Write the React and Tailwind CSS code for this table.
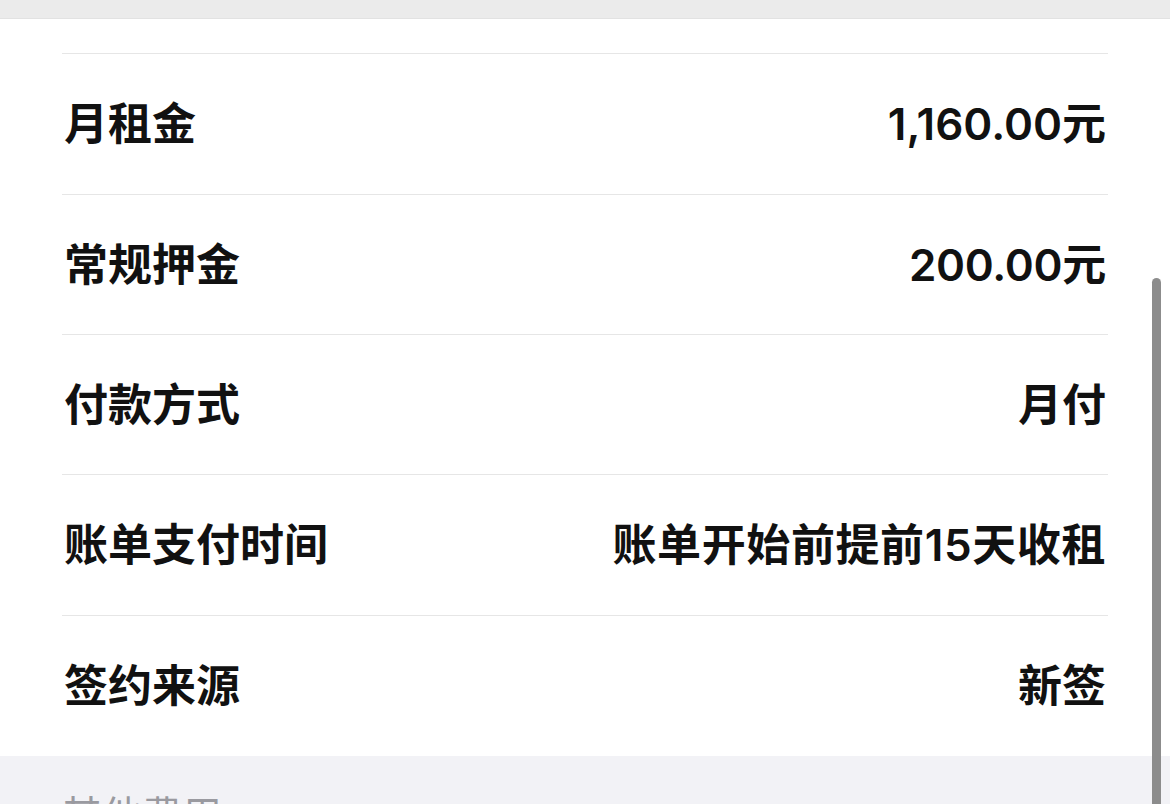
import React from "react";

const rows = [
  { label: "月租金", value: "1,160.00元", h: "h-[141px]", t: "tracking-[0px]" },
  { label: "常规押金", value: "200.00元", h: "h-[140px]", t: "tracking-[-0.3px]" },
  { label: "付款方式", value: "月付", h: "h-[140px]", t: "tracking-[0px]" },
  { label: "账单支付时间", value: "账单开始前提前15天收租", h: "h-[141px]", t: "tracking-[0.6px]" },
  { label: "签约来源", value: "新签", h: "h-[141px]", t: "tracking-[0px]" },
];

export default function App() {
  return (
    <div
      className="relative w-[1170px] h-[804px] overflow-hidden bg-white text-[#111]"
      style={{ fontFamily: 'Inter, "Noto Sans CJK SC", sans-serif' }}
    >
      <div className="h-[19px] bg-[#ebebeb] border-b border-[#e2e2e2]" />
      <div className="px-[62px]">
        <div className="h-[34px]" />
        {rows.map((r) => (
          <div
            key={r.label}
            className={`flex items-center justify-between border-t border-[#e6e6e6] ${r.h} text-[44px] font-semibold leading-none`}
          >
            <span className="pl-[2px]">{r.label}</span>
            <span className={`pr-[2px] ${r.t}`}>{r.value}</span>
          </div>
        ))}
      </div>
      <div className="h-[60px] bg-[#f2f2f6] px-[62px] pt-[40px]">
        <span className="text-[40px] leading-none text-[#9a9aa0]">其他费用</span>
      </div>
      <div className="absolute left-[1152px] top-[278px] w-[9px] h-[560px] rounded-full bg-[#8c8c8c]" />
    </div>
  );
}
